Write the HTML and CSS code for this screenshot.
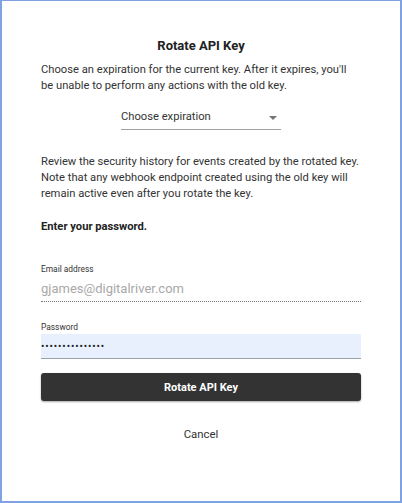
FILE: index.html
```html
<!DOCTYPE html>
<html>
<head>
<meta charset="utf-8">
<link rel="stylesheet" href="styles.css">
</head>
<body>
<div class="frame">
  <h1 class="title">Rotate API Key</h1>
  <p class="text">Choose an expiration for the current key. After it expires, you'll be unable to perform any actions with the old key.</p>
  <div class="select">
    <span>Choose expiration</span>
    <span class="arrow"></span>
  </div>
  <p class="text text2">Review the security history for events created by the rotated key. Note that any webhook endpoint created using the old key will remain active even after you rotate the key.</p>
  <p class="strong">Enter your password.</p>
  <div class="label label-email">Email address</div>
  <div class="email">gjames@digitalriver.com</div>
  <div class="label label-pass">Password</div>
  <div class="pass"><span class="dots">•••••••••••••••</span></div>
  <button class="btn">Rotate API Key</button>
  <div class="cancel">Cancel</div>
</div>
</body>
</html>
```
FILE: styles.css
```css
html, body {
  margin: 0;
  padding: 0;
  background: #fff;
}
.frame {
  box-sizing: border-box;
  width: 402px;
  height: 503px;
  border: 2px solid #7ea2e2;
  border-top-width: 1px;
  padding: 37px 39px 0 39px;
  font-family: Roboto, "Liberation Sans", sans-serif;
  color: #333;
  display: flex;
  flex-direction: column;
}
.title {
  margin: 0;
  font-size: 13px;
  font-weight: 700;
  line-height: 16px;
  text-align: center;
  color: #222;
}
.text {
  margin: 8px 0 0 0;
  font-size: 11.2px;
  line-height: 16px;
  color: #333;
}
.select {
  align-self: center;
  width: 160px;
  box-sizing: border-box;
  margin-top: 15px;
  display: flex;
  justify-content: space-between;
  align-items: center;
  font-size: 11.2px;
  line-height: 16px;
  color: #333;
  padding-bottom: 4px;
  border-bottom: 1px solid #a0a0a0;
}
.arrow {
  width: 0;
  height: 0;
  border-left: 4px solid transparent;
  border-right: 4px solid transparent;
  border-top: 4px solid #757575;
  margin-right: 4px;
  margin-top: 2px;
}
.text2 {
  margin-top: 24px;
}
.strong {
  margin: 17px 0 0 0;
  font-size: 11.2px;
  line-height: 16px;
  font-weight: 700;
  color: #222;
}
.label {
  font-size: 8.4px;
  line-height: 12px;
  color: #333;
}
.label-email {
  margin-top: 28px;
}
.email {
  margin-top: 4px;
  font-size: 13px;
  line-height: 20px;
  color: #a8a8a8;
  padding-bottom: 2px;
  border-bottom: 1px dotted #777;
}
.label-pass {
  margin-top: 19px;
}
.pass {
  margin-top: 1px;
  height: 24px;
  background: #e8f0fe;
  border-bottom: 1px solid #9aa3ad;
  display: flex;
  align-items: center;
}
.dots {
  font-size: 10px;
  letter-spacing: 0.9px;
  color: #222;
}
.btn {
  margin-top: 14px;
  height: 28px;
  border: none;
  border-radius: 3px;
  background: #333;
  color: #fff;
  font-family: Roboto, "Liberation Sans", sans-serif;
  font-size: 11px;
  font-weight: 700;
  box-shadow: 0 1px 2px rgba(0,0,0,0.35);
  padding: 0;
}
.cancel {
  margin-top: 25px;
  font-size: 11.4px;
  line-height: 16px;
  text-align: center;
  color: #333;
}
```
